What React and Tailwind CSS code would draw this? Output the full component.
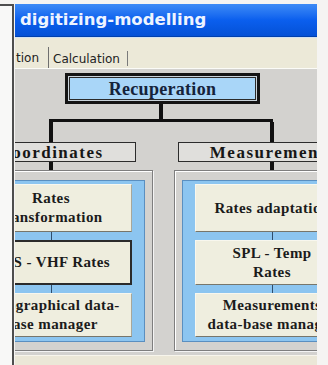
import React from 'react';

const serif = "font-['Liberation_Serif',serif]";

const COLUMNS = [
  {
    title: 'Coordinates',
    width: 'w-[204px]',
    items: [
      { text: 'Rates\ntransformation', h: 'h-[48px]' },
      { text: 'GPS - VHF Rates', h: 'h-[45px]', selected: true },
      { text: 'Topographical data-\nbase manager', h: 'h-[44px]' },
    ],
  },
  {
    title: 'Measurements',
    width: 'w-[196px]',
    items: [
      { text: 'Rates adaptation', h: 'h-[48px]' },
      { text: 'SPL - Temp\nRates', h: 'h-[45px]' },
      { text: 'Measurements\ndata-base manager', h: 'h-[44px]' },
    ],
  },
];

function Item({ text, h, selected }) {
  return (
    <div
      className={
        selected
          ? `${h} flex items-center justify-center text-center bg-[#eeeddd] border-2 border-[#2b2b2b]`
          : `${h} flex items-center justify-center text-center bg-[#efeedf] border border-[#f8f7ee] border-b-[#77766b] border-r-[#a8a799]`
      }
    >
      <span className={`${serif} whitespace-pre-line whitespace-nowrap text-[15px] leading-[19px] font-bold tracking-[0.4px] text-[#1b1b1b]`}>
        {text}
      </span>
    </div>
  );
}

function Column({ title, width, items }) {
  return (
    <div className={`${width} shrink-0 flex flex-col items-center`}>
      <div className="w-[4px] h-[20px] bg-[#111]" />
      <div className={`${serif} h-[20px] px-[31px] border border-[#2c2c2c] bg-[#e0dfdc] flex items-center text-[17px] leading-none font-bold tracking-[1.5px] text-[#161616] whitespace-nowrap`}>
        {title}
      </div>
      <div className="w-[4px] h-[8px] bg-[#111]" />
      <div className="self-stretch border border-[#7e7e7e] shadow-[inset_1px_1px_0_#ffffff,1px_1px_0_#f4f4f4] pt-[9px] px-[7px] pb-[8px]">
        <div className="border border-[#5a8fc0] bg-[#8cc5f0] pt-[3px] px-[12px] pb-[4px] flex flex-col">
          {items.map((it, i) => (
            <React.Fragment key={it.text}>
              {i > 0 && (
                <div className="h-[8px] flex justify-center">
                  <div className="w-px bg-[#2f4d6b]" />
                </div>
              )}
              <Item {...it} />
            </React.Fragment>
          ))}
        </div>
      </div>
    </div>
  );
}

function Screenshot() {
  return (
    <div className="w-[302px] h-[361px] mt-[4px] flex flex-col overflow-hidden">
      {/* title bar */}
      <div className="h-[33px] shrink-0 bg-linear-to-b from-[#3d8bf6] via-[#0b5fee] to-[#0551d6] border-b border-[#0040ad] flex items-center pl-[5px]">
        <span className="font-['DejaVu_Sans',sans-serif] text-[16.5px] font-bold text-[#eef4ff] whitespace-nowrap">
          digitizing-modelling
        </span>
      </div>
      <div className="h-[1px] shrink-0 bg-[#d2e1f2]" />
      {/* tabs */}
      <div className="h-[31px] shrink-0 bg-[#ece9d8] border-b border-[#fbfbf7] flex items-end font-['DejaVu_Sans',sans-serif] text-[12px] text-[#222]">
        <div className="w-[34px] h-[21px] border-r border-[#6f6f6f] flex items-center pl-[1px]">tion</div>
        <div className="w-[79px] h-[15px] mb-[2px] border-r border-[#7a7a7a] flex items-center pl-[4px]">Calculation</div>
      </div>
      {/* diagram */}
      <div className="flex-1 bg-[#d3d2cf] flex flex-col">
        <div className="mt-[4px] ml-[50px] w-[195px] h-[31px] shrink-0 border-[3px] border-[#141414] bg-[#a9d6f8] shadow-[inset_0_0_0_1px_#c9d3da,inset_0_0_0_2px_#2a2a2a] flex items-center justify-center">
          <span className={`${serif} text-[18px] leading-none font-bold tracking-[0.3px] text-[#15233a]`}>Recuperation</span>
        </div>
        <div className="ml-[144px] w-[4px] h-[15px] shrink-0 bg-[#111]" />
        <div className="ml-[34px] w-[224px] h-[3px] shrink-0 bg-[#111]" />
        <div className="-ml-[66px] flex gap-[21px] items-start">
          {COLUMNS.map((c) => (
            <Column key={c.title} {...c} />
          ))}
        </div>
      </div>
      <div className="h-[10px] shrink-0 bg-[#ebe7d7] border-t border-[#f7f5ec]" />
    </div>
  );
}

export default function App() {
  return (
    <div className="w-[328px] h-[365px] bg-[#f5f4f2] flex overflow-hidden">
      <div className="w-[14px] h-[361px] mt-[4px] border-t-2 border-r-2 border-[#4e4e4e] bg-[#f8f8f7]" />
      <div className="w-[1px]" />
      <Screenshot />
    </div>
  );
}
